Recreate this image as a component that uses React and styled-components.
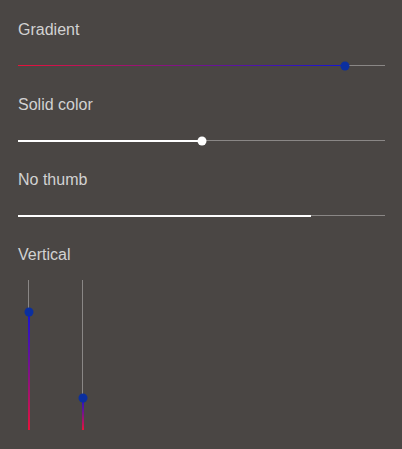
import React from "react";
import styled, { createGlobalStyle } from "styled-components";

const GlobalStyle = createGlobalStyle`
  html, body {
    margin: 0;
    padding: 0;
    background: #4a4644;
  }
`;

const Page = styled.div`
  box-sizing: border-box;
  width: 402px;
  min-height: 449px;
  padding: 21px 17px 0 18px;
  background: #4a4644;
  font-family: "Liberation Sans", Arial, sans-serif;
`;

const Section = styled.div`
  display: flex;
  flex-direction: column;
  margin-bottom: 29px;
`;

const Label = styled.div`
  font-size: 16px;
  line-height: 18px;
  color: #d2d2d2;
`;

// horizontal track
const HTrack = styled.div`
  position: relative;
  margin-top: 26px;
  height: 2px;
  width: 100%;
  display: flex;
  align-items: center;
`;

const HRail = styled.div`
  position: absolute;
  left: 0;
  right: 0;
  top: 0;
  height: 1px;
  background: #8a8786;
`;

const HFill = styled.div`
  position: relative;
  height: ${(p) => (p.$gradient ? "1px" : "2px")};
  align-self: ${(p) => (p.$gradient ? "flex-start" : "stretch")};
  background: ${(p) =>
    p.$gradient ? "linear-gradient(to right, #e8123a, #1414d8)" : "#ffffff"};
`;

const Thumb = styled.div`
  position: absolute;
  width: 9px;
  height: 9px;
  border-radius: 50%;
  background: ${(p) => p.$color};
  transform: translate(-50%, -50%);
`;

const VRow = styled.div`
  display: flex;
  gap: 52px;
  margin-top: 16px;
  padding-left: 10px;
`;

const VTrack = styled.div`
  position: relative;
  width: 2px;
  height: 150px;
  display: flex;
  flex-direction: column;
  justify-content: flex-end;
`;

const VRail = styled.div`
  position: absolute;
  top: 0;
  bottom: 0;
  left: 0;
  width: 1px;
  background: #8a8786;
`;

const VFill = styled.div`
  position: relative;
  width: 2px;
  background: linear-gradient(to top, #e8123a, #1414d8);
`;

const HSlider = ({ value, gradient, thumb }) => (
  <HTrack>
    <HRail />
    <HFill $gradient={gradient} style={{ width: `${value}%` }} />
    {thumb && (
      <Thumb
        $color={thumb}
        style={{ left: `${value}%`, top: "50%" }}
      />
    )}
  </HTrack>
);

const VSlider = ({ value }) => (
  <VTrack>
    <VRail />
    <VFill style={{ height: `${value}%` }} />
    <Thumb $color="#0b2f9f" style={{ left: "50%", bottom: `${value}%`, transform: "translate(-50%, 50%)" }} />
  </VTrack>
);

export default function App() {
  return (
    <Page>
      <GlobalStyle />
      <Section>
        <Label>Gradient</Label>
        <HSlider value={89.1} gradient thumb="#0b2f9f" />
      </Section>
      <Section>
        <Label>Solid color</Label>
        <HSlider value={50.1} thumb="#ffffff" />
      </Section>
      <Section>
        <Label>No thumb</Label>
        <HSlider value={79.8} />
      </Section>
      <Section>
        <Label>Vertical</Label>
        <VRow>
          <VSlider value={78.7} />
          <VSlider value={21.3} />
        </VRow>
      </Section>
    </Page>
  );
}
